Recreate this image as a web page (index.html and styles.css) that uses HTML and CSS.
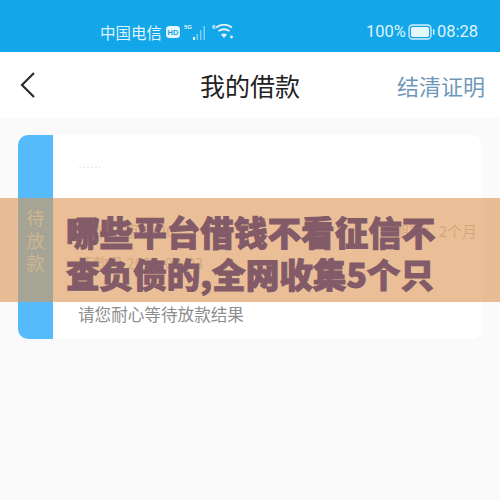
FILE: index.html
```html
<!DOCTYPE html>
<html lang="zh">
<head>
<meta charset="utf-8">
<title>我的借款</title>
<link rel="stylesheet" href="styles.css">
</head>
<body>
<div class="status">
  <div class="status-left">
    <span class="carrier">中国电信</span>
    <svg class="hd" width="14" height="12" viewBox="0 0 14 12"><rect width="14" height="12" rx="3.5" fill="#e6f6fd"/><text x="7" y="8.6" class="hd-text" text-anchor="middle">HD</text></svg>
    <svg class="signal" width="24" height="18" viewBox="0 0 24 18"><text x="0" y="6" class="mini">5G</text><rect x="9" y="14" width="2" height="3" fill="#e6f6fd"/><g fill="#7fcdf2"><rect x="12.500" y="11" width="1.500" height="6"/><rect x="16" y="7" width="1.500" height="10"/><rect x="19.500" y="3" width="1.500" height="14"/></g></svg>
    <svg class="wifi" width="22" height="18" viewBox="0 0 22 18"><text x="0" y="6" class="mini">6</text><g fill="none" stroke="#e6f6fd" stroke-width="1.800"><path d="M4 4.500C9 1 15 1 20 4.500"/><path d="M6.500 8C10 5.800 14 5.800 17.500 8"/></g><path d="M9 11.500C11 10 13 10 15 11.500L12 15Z" fill="#e6f6fd"/><circle cx="19.500" cy="14" r="1.400" fill="#e6f6fd"/></svg>
  </div>
  <div class="status-right">
    <span>100%</span>
    <svg class="battery" width="27" height="16" viewBox="0 0 27 16"><rect x="1" y="1" width="22" height="14" rx="3.500" fill="none" stroke="#d8f1fc" stroke-width="1.300"/><rect x="3" y="3" width="18" height="10" rx="1.800" fill="#e6f6fd"/><rect x="25" y="5" width="1.500" height="6" rx=".7" fill="#d8f1fc"/></svg>
    <span>08:28</span>
  </div>
</div>
<header class="nav">
  <svg class="back" width="18" height="28" viewBox="0 0 18 28"><path d="M15 2 3 14l12 12" fill="none" stroke="#2b2b2b" stroke-width="2.200"/></svg>
  <h1 class="title">我的借款</h1>
  <a class="proof">结清证明</a>
</header>
<main class="content">
  <section class="card">
    <div class="tab">待<br>放<br>款</div>
    <div class="card-body">
      <div class="amount">······</div>
      <div class="row"><span>借款日期 2020</span><span>期数：2个月</span></div>
      <div class="row"><span>还款日 2020-02-03</span></div>
      <div class="note">请您耐心等待放款结果</div>
    </div>
  </section>
</main>
<div class="banner">
  <p class="headline">哪些平台借钱不看征信不<br>查负债的,全网收集5个只</p>
</div>
</body>
</html>
```

FILE: styles.css
```css
* { box-sizing: border-box; }
html, body { margin: 0; padding: 0; }
body {
  width: 500px;
  height: 500px;
  overflow: hidden;
  position: relative;
  background: #fafafb;
  font-family: "Liberation Sans", "Noto Sans CJK SC", sans-serif;
}
.status {
  height: 52px;
  background: #13a6e9;
  color: #dff4fd;
  display: flex;
  align-items: center;
  justify-content: space-between;
  padding: 11px 22px 0 100px;
  font-size: 15px;
}
.status-left, .status-right { display: flex; align-items: center; }
.status-left { gap: 4px; }
.status-right { gap: 2px; font-family: "Roboto", sans-serif; font-size: 16.500px; }
.carrier { font-family: "Noto Sans CJK SC", sans-serif; font-size: 15.500px; }
.hd-text { font: 700 7.500px "Liberation Sans", sans-serif; fill: #13a6e9; }
.mini { font: 700 6px "Liberation Sans", sans-serif; fill: #e6f6fd; }
.nav {
  height: 66px;
  background: #fff;
  display: grid;
  grid-template-columns: 1fr auto 1fr;
  align-items: center;
  padding: 0 15px 0 19px;
}
.back { display: block; }
.title {
  margin: 0;
  font: 400 25px "Noto Sans CJK SC", sans-serif;
  color: #222;
  transform: translateX(-2px);
}
.proof {
  justify-self: end;
  font: 400 22px "Noto Sans CJK SC", sans-serif;
  color: #6f98bb;
}
.content { padding: 17px 18px 0; }
.card {
  height: 204px;
  display: flex;
  background: #fff;
  border-radius: 10px;
}
.tab {
  width: 35px;
  flex: none;
  background: #55bbfb;
  border-radius: 10px 0 0 10px;
  color: #b6e6f0;
  font: 400 18px/22.500px "Noto Sans CJK SC", sans-serif;
  text-align: center;
  padding-top: 71px;
}
.card-body {
  flex: 1;
  padding: 22px 5px 0 25px;
  display: flex;
  flex-direction: column;
  color: #c4c4c4;
}
.amount { height: 58px; color: #ddd; font-size: 12px; line-height: 20px; }
.row {
  display: flex;
  justify-content: space-between;
  font: 400 15px/32px "Noto Sans CJK SC", sans-serif;
  height: 32px;
}
.note {
  margin-top: 23px;
  font: 400 16.600px/24px "Noto Sans CJK SC", sans-serif;
  color: #8d8d8d;
}
.banner {
  position: absolute;
  left: 0;
  top: 198px;
  width: 500px;
  height: 104px;
  background: rgba(220, 148, 82, .6);
  padding: 13px 0 0 66px;
}
.headline {
  margin: 0;
  font: 900 33.600px/42px "Noto Sans CJK SC", sans-serif;
  color: #825a68;
  -webkit-text-stroke: 1px #825a68;
  white-space: nowrap;
}
```
